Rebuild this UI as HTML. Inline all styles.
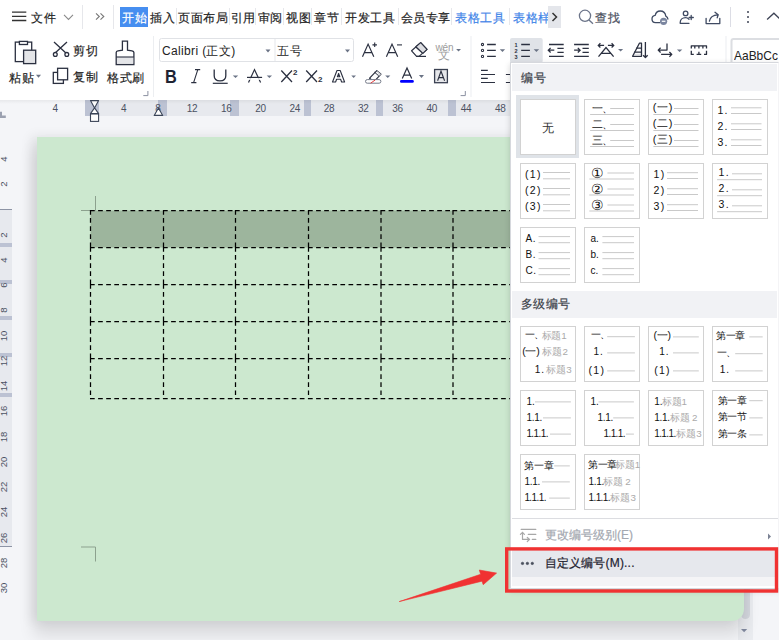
<!DOCTYPE html>
<html><head><meta charset="utf-8">
<style>
*{box-sizing:border-box;margin:0;padding:0}
html,body{width:779px;height:640px;overflow:hidden;background:#f4f5f8;font-family:"Liberation Sans",sans-serif;color:#222}
.a{position:absolute}
#top{left:0;top:0;width:779px;height:35px;background:#fff}
#tb{left:0;top:35px;width:779px;height:65px;background:#fff}
#page{left:37px;top:137px;width:707px;height:484px;background:#cce8cf;box-shadow:-1px 13px 16px 2px rgba(0,0,0,0.105),-5px 0px 12px 1px rgba(0,0,0,0.08);border-bottom-right-radius:12px}
.t{position:absolute;top:9.5px;height:16px;line-height:16px;font-size:12px;letter-spacing:0.5px;-webkit-text-stroke:0.2px currentColor;color:#1f1f1f;white-space:nowrap}
.sep{position:absolute;width:1px;top:8px;height:17px;background:#e6e7eb}
svg{position:absolute;overflow:visible}
.rn{position:absolute;top:3px;width:20px;text-align:center;font-size:10px;letter-spacing:-0.4px;line-height:12px;color:#4b5262}
.it{position:absolute;white-space:nowrap}
.bx{position:absolute;border:1px solid #d2d2d2;background:#fff}
.vn{position:absolute;left:-6.5px;width:20px;height:20px;text-align:center;font-size:9.5px;line-height:20px;color:#4b5262;transform:rotate(-90deg)}
</style></head><body>
<div class="a" style="left:737.5px;top:116px;width:15px;height:524px;background:#eaecf0"></div>
<div class="a" style="left:740.5px;top:480px;width:9.5px;height:139px;background:#d4d7de;border-radius:0 0 5px 5px"></div>
<div id="page" class="a"></div>
<svg style="left:0;top:0" width="779" height="640"><rect x="90.5" y="210.5" width="435.5" height="37" fill="#9db59d"/><path d="M95.5 196V210.5M81 210.5H95.5M95.5 547V561.5M81 547H95.5" stroke="#8ca18e" stroke-width="1" fill="none"/><path d="M90.0 210.5H163.0M163.0 210.5H235.0M235.0 210.5H308.0M308.0 210.5H380.5M380.5 210.5H452.5M452.5 210.5H525.0M90.0 247.5H163.0M163.0 247.5H235.0M235.0 247.5H308.0M308.0 247.5H380.5M380.5 247.5H452.5M452.5 247.5H525.0M90.0 284.5H163.0M163.0 284.5H235.0M235.0 284.5H308.0M308.0 284.5H380.5M380.5 284.5H452.5M452.5 284.5H525.0M90.0 321.5H163.0M163.0 321.5H235.0M235.0 321.5H308.0M308.0 321.5H380.5M380.5 321.5H452.5M452.5 321.5H525.0M90.0 358.5H163.0M163.0 358.5H235.0M235.0 358.5H308.0M308.0 358.5H380.5M380.5 358.5H452.5M452.5 358.5H525.0M90.0 398.5H163.0M163.0 398.5H235.0M235.0 398.5H308.0M308.0 398.5H380.5M380.5 398.5H452.5M452.5 398.5H525.0M90.5 210.0V247.0M90.5 247.0V284.0M90.5 284.0V321.0M90.5 321.0V358.0M90.5 358.0V398.0M163.5 210.0V247.0M163.5 247.0V284.0M163.5 284.0V321.0M163.5 321.0V358.0M163.5 358.0V398.0M235.5 210.0V247.0M235.5 247.0V284.0M235.5 284.0V321.0M235.5 321.0V358.0M235.5 358.0V398.0M308.5 210.0V247.0M308.5 247.0V284.0M308.5 284.0V321.0M308.5 321.0V358.0M308.5 358.0V398.0M381 210.0V247.0M381 247.0V284.0M381 284.0V321.0M381 321.0V358.0M381 358.0V398.0M453 210.0V247.0M453 247.0V284.0M453 284.0V321.0M453 321.0V358.0M453 358.0V398.0M525.5 210.0V247.0M525.5 247.0V284.0M525.5 284.0V321.0M525.5 321.0V358.0M525.5 358.0V398.0" stroke="#000" stroke-width="1.25" stroke-dasharray="4.7 3.4" fill="none"/></svg>
<div id="top" class="a">
  <svg style="left:0;top:0" width="779" height="35">
    <g stroke="#333" stroke-width="1.3" fill="none">
      <path d="M12 12.2H26.3M12 16.4H26.3M12 20.5H26.3"/>
    </g>
    <path d="M64 14.8L68.5 19.5L73 14.8" stroke="#8a8a8a" stroke-width="1.1" fill="none"/>
    <path d="M96 13.3L99.3 16.5L96 19.7M100.5 13.3L103.8 16.5L100.5 19.7" stroke="#777" stroke-width="1.1" fill="none"/>
  </svg>
  <div class="t" style="left:31px">文件</div>
  <div class="sep" style="left:82px;top:5px;height:24px"></div>
  <div class="sep" style="left:113px;top:5px;height:24px"></div>
  <div class="a" style="left:120px;top:7px;width:28px;height:20px;background:#468ef0"></div>
  <div class="t" style="left:122px;color:#fff">开始</div>
  <div class="t" style="left:150px">插入</div>
  <div class="sep" style="left:176px"></div>
  <div class="t" style="left:178px">页面布局</div>
  <div class="sep" style="left:229px"></div>
  <div class="t" style="left:230.5px">引用</div>
  <div class="sep" style="left:255px"></div>
  <div class="t" style="left:257.5px">审阅</div>
  <div class="sep" style="left:282.5px"></div>
  <div class="t" style="left:286px">视图</div>
  <div class="sep" style="left:311px"></div>
  <div class="t" style="left:314px">章节</div>
  <div class="sep" style="left:341px"></div>
  <div class="t" style="left:345px">开发工具</div>
  <div class="sep" style="left:397.5px"></div>
  <div class="t" style="left:400.5px">会员专享</div>
  <div class="sep" style="left:450.5px"></div>
  <div class="t" style="left:455px;color:#3f85e8">表格工具</div>
  <div class="sep" style="left:508.5px"></div>
  <div class="a" style="left:512px;top:0;width:36px;height:35px;overflow:hidden"><div class="t" style="left:1px;color:#3f85e8">表格样式</div></div>
  <div class="a" style="left:548px;top:6px;width:13px;height:22px;background:#e4e6eb"></div>
  <svg style="left:0;top:0" width="779" height="35">
    <path d="M552.5 13L556.5 17L552.5 21" stroke="#333" stroke-width="1.5" fill="none"/>
    <circle cx="585" cy="15.8" r="5.6" stroke="#6b7489" stroke-width="1.3" fill="none"/>
    <path d="M589 20L593 23.8" stroke="#6b7489" stroke-width="1.3"/>
  </svg>
  <div class="t" style="left:595px;color:#4a5060">查找</div>
  <svg style="left:0;top:0" width="779" height="35">
    <g stroke="#3f4a62" stroke-width="1.3" fill="none" stroke-linecap="round" stroke-linejoin="round">
      <path d="M660 22.6H655.5C653.2 22.6 652 21 652 19C652 17 653.3 15.6 655.2 15.4C655.7 12.8 657.6 11 660.2 11C663.2 11 665.4 13.2 665.8 16.2C667 16.8 667.8 17.8 667.9 19"/>
      <circle cx="685.6" cy="13.4" r="2.3"/>
      <path d="M689 19.2C688 18.2 686.9 17.6 685.6 17.6C682.5 17.6 680.2 19.8 680.2 22.5V23.3H689"/>
      <path d="M691.2 15.4V19.6M689.1 17.5H693.3"/>
      <path d="M706.1 18.3V23.6H719.8V18.3"/>
      <path d="M709.4 21.2C710 17.4 713 15 718 14.8M715 12.3L718.2 14.8L717.2 17.8"/>
    </g>
    <circle cx="663.6" cy="21.3" r="3.6" fill="#7b86a0"/>
    <path d="M661.8 21.3H665.4" stroke="#fff" stroke-width="1.2"/>
    <rect x="730" y="7" width="1" height="20" fill="#dcdde5"/>
    <rect x="747" y="11" width="2" height="2" fill="#6f7380"/>
    <rect x="747" y="16" width="2" height="2" fill="#6f7380"/>
    <rect x="747" y="21" width="2" height="2" fill="#6f7380"/>
    <path d="M767.1 19.5L773.9 13.2L780.5 19.5" stroke="#3d4355" stroke-width="1.3" fill="none"/>
  </svg>
</div>
<div id="tb" class="a">
  <svg style="left:0;top:0" width="779" height="65">
    <g stroke="#2b3040" stroke-width="1.3" fill="none">
      <rect x="15.3" y="7.1" width="16.4" height="19.5"/>
      <rect x="19.4" y="6.4" width="8.1" height="3.1" fill="#fff"/>
      <rect x="23.6" y="15.2" width="12.1" height="13.4" fill="#e4e5e8"/>
      <path d="M54 7.1L67 19M67 7.1L54 19"/>
      <circle cx="55.3" cy="19.4" r="1.9" fill="#fff"/>
      <circle cx="66.8" cy="19.4" r="1.9" fill="#fff"/>
      <rect x="53.3" y="37.4" width="10.1" height="11" />
      <rect x="57.6" y="33.3" width="10" height="11.5" fill="#fff"/>
      <path d="M116.2 29.5V17.4C116.2 16.6 117 16 118 15.8L122.4 15.2V6.1H127.5V15.2L132 15.8C133 16 133.9 16.6 133.9 17.4V29.5Z" />
    </g>
    <rect x="117" y="22" width="16.2" height="6.8" fill="#e4e5e8"/>
    <path d="M116.2 22H133.9" stroke="#2b3040" stroke-width="1.1"/>
    <path d="M36 39.8H41L38.5 42.8Z" fill="#6a7385"/>
    <path d="M143.3 60.6H147.9V56" stroke="#8a90a0" stroke-width="1" fill="none"/>
    <rect x="153" y="1" width="1" height="61" fill="#eceef1"/>
  </svg>
  <div class="t" style="left:9px;top:35px">粘贴</div>
  <div class="t" style="left:73px;top:8px">剪切</div>
  <div class="t" style="left:73px;top:33.5px">复制</div>
  <div class="t" style="left:107px;top:34.5px">格式刷</div>
  <svg style="left:0;top:0" width="779" height="65">
    <rect x="159.5" y="3.5" width="194" height="23" rx="2" fill="#fff" stroke="#e0e2e6"/>
    <rect x="274.5" y="4" width="1" height="22" fill="#e6e8eb"/>
    <path d="M265.5 14.6H270.5L268 17.4Z" fill="#6a7385"/>
    <path d="M345 14.6H350L347.5 17.4Z" fill="#6a7385"/>
    <!-- I -->
    <path d="M197.8 34.6L193.6 47.6M195 34.6H200.2M191.2 47.6H196.4" stroke="#2b3040" stroke-width="1.1" fill="none"/>
    <!-- U -->
    <path d="M214.2 34.4V40.8C214.2 44 216.6 45.9 220 45.9C223.4 45.9 225.8 44 225.8 40.8V34.4" stroke="#2b3040" stroke-width="1.3" fill="none"/>
    <path d="M212.8 48.3H227.7" stroke="#2b3040" stroke-width="1.2"/>
    <path d="M232.8 40.6H238.2L235.5 43Z" fill="#6a7385"/>
    <!-- A strike -->
    <path d="M248.5 47.5L254.5 34.6L260.6 47.5" stroke="#2b3040" stroke-width="1.2" fill="none" stroke-dasharray="0 0"/>
    <path d="M247 42.4H262.1" stroke="#2b3040" stroke-width="1.2"/>
    <rect x="249" y="43.2" width="11" height="1.6" fill="#fff"/>
    <path d="M266.7 40.6H272L269.35 43Z" fill="#6a7385"/>
    <!-- X2 -->
    <path d="M281.3 35.5L292 47M292 35.5L281.3 47" stroke="#2b3040" stroke-width="1.3"/>
    <path d="M306.2 35.5L317 47M317 35.5L306.2 47" stroke="#2b3040" stroke-width="1.3"/>
    <!-- A outline -->
    <path d="M332.5 47L337 35.5H340.2L344.6 47H341.6L340.6 44.2H336.6L335.6 47Z M337.4 41.8H339.8L338.6 38.4Z" fill="#fff" stroke="#2b3040" stroke-width="1.1" stroke-linejoin="round"/>
    <path d="M351.3 40.6H356L353.65 43Z" fill="#6a7385"/>
    <!-- highlighter -->
    <path d="M369.6 43.2L376.8 35.6L381 39.2L373.8 46.8Z" fill="#fff" stroke="#2b3040" stroke-width="1.2" stroke-linejoin="round"/>
    <path d="M374.5 37.2L378.9 41" stroke="#2b3040" stroke-width="1"/>
    <path d="M376.8 35.6L378.8 37.2L381 39.2L378.9 41Z" fill="#d9dbdf"/>
    <rect x="365.5" y="44.6" width="15.4" height="3.6" rx="1.8" fill="#fff" stroke="#747a88" stroke-width="1"/>
    <path d="M370.6 48.2L375.2 45" stroke="#e03c3c" stroke-width="1"/>
    <path d="M385.2 40.6H390.3L387.75 43Z" fill="#6a7385"/>
    <!-- A color -->
    <path d="M402.3 43.6L407 33L411.7 43.6M403.8 40.2H410.2" stroke="#2b3040" stroke-width="1.2" fill="none"/>
    <rect x="400" y="45.1" width="13.8" height="2.6" rx="1.3" fill="#0000ff"/>
    <path d="M418.9 40H424L421.45 42.9Z" fill="#6a7385"/>
    <!-- boxed A -->
    <rect x="434.6" y="34.5" width="12.8" height="13.2" fill="#e6e7ea" stroke="#3a4152" stroke-width="1.3"/>
    <path d="M437.6 45.8L441 36.2L444.6 45.8M438.8 42.6H443.4" stroke="#2b3040" stroke-width="1.1" fill="none"/>
    <!-- A+ A- -->
    <path d="M362.5 21.7L368.1 9.1L373.8 21.7M364.4 17.6H371.9" stroke="#2b3040" stroke-width="1.2" fill="none"/>
    <path d="M374.7 7.6V12.1M372.45 9.85H376.95" stroke="#2b3040" stroke-width="1.1"/>
    <path d="M386.4 21.7L392 9.1L397.7 21.7M388.3 17.6H395.8" stroke="#2b3040" stroke-width="1.2" fill="none"/>
    <path d="M397 9.9H402" stroke="#2b3040" stroke-width="1.1"/>
    <!-- eraser -->
    <path d="M411.6 15.8L420.7 7.6L427 14.4L419 21.4H416.6Z" fill="#fff" stroke="#2b3040" stroke-width="1.2" stroke-linejoin="round"/>
    <path d="M415.8 11.8L422.9 18.4" stroke="#2b3040" stroke-width="1.1"/>
    <path d="M420.7 7.6L427 14.4L422.9 18.4L415.8 11.8Z" fill="#dcdde1" stroke="#2b3040" stroke-width="1.2" stroke-linejoin="round"/>
    <path d="M416.6 21.4H426" stroke="#2b3040" stroke-width="1.2"/>
    <path d="M456.1 14H461L458.55 16.5Z" fill="#6a7385"/>
    <path d="M460.6 60.6H465.3V56" stroke="#8a90a0" stroke-width="1" fill="none"/>
    <rect x="470.5" y="1" width="1" height="61" fill="#eceef1"/>
    <!-- bullets -->
    <g stroke="#2b3040" fill="none">
      <circle cx="482.5" cy="9.5" r="1.1" stroke-width="1.1"/>
      <circle cx="482.5" cy="15.4" r="1.1" stroke-width="1.1"/>
      <circle cx="482.5" cy="21.4" r="1.1" stroke-width="1.1"/>
      <path d="M487.1 9.5H495.8M487.1 15.4H495.8M487.1 21.4H495.8" stroke-width="1.3"/>
    </g>
    <path d="M499.8 14.3H505.1L502.45 16.9Z" fill="#6a7385"/>
    <rect x="510" y="2.9" width="32.7" height="25" rx="2" fill="#e0e3e8"/>
    <g fill="#2b3040" font-family="Liberation Sans" font-weight="bold" font-size="5.5">
      <text x="514.6" y="11.8">1</text><text x="514.4" y="17.7">2</text><text x="514.4" y="23.7">3</text>
    </g>
    <path d="M521.2 9.5H529.9M521.2 15.4H529.9M521.2 21.4H529.9" stroke="#2b3040" stroke-width="1.3"/>
    <path d="M533.7 14.3H539.1L536.4 16.9Z" fill="#6a7385"/>
    <!-- indents -->
    <g stroke="#2b3040" stroke-width="1.3" fill="none">
      <path d="M549 9.5H563.7M557.4 13.4H563.7M557.4 17.4H563.7M549 21.3H563.7M548.3 15.2H554.3M550.6 12.9L548.3 15.2L550.6 17.5"/>
      <path d="M574.1 9.5H588.8M582.5 13.4H588.8M582.5 17.4H588.8M574.1 21.3H588.8M574.1 15.2H580.1M577.8 12.9L580.1 15.2L577.8 17.5"/>
      <path d="M598.3 10.4H604.1M600.4 8.3L598.3 10.4L600.4 12.5M607.9 10.4H613.7M611.6 8.3L613.7 10.4L611.6 12.5"/>
      <path d="M598.5 21.6L606 12.5L613.6 21.6M601.6 18.3H610.5"/>
    </g>
    <path d="M618 13.9H623.2L620.6 16.6Z" fill="#6a7385"/>
    <!-- sort -->
    <path d="M634 19.3H641" stroke="#dcdde1" stroke-width="1"/>
    <g stroke="#2b3040" stroke-width="1.3" fill="none" stroke-linejoin="round">
      <path d="M632.6 21.3L639.4 8.2H641.5V21.3Z"/>
      <path d="M636.3 13.1H641.5M634.2 17.2H641.5"/>
      <path d="M645.4 7V22.4M643.1 20.2L645.4 22.5L647.7 20.2"/>
      <path d="M667 8.4V15.1H658.2M660.6 12.7L658.2 15.1L660.6 17.5"/>
      <path d="M661.1 19.4H671.8M669.4 17L671.8 19.4L669.4 21.8"/>
      <path d="M691.3 13.5V10.8H706.5V13.5M694.8 10.8V13.5M698.9 10.8V13.5M702.9 10.8V13.5"/>
      <path d="M691.3 15.8V19.4H693.8M706.5 15.8V19.4H704M696.6 19.4H701.2M698.9 16.8V19.4"/>
    </g>
    <path d="M676.9 14.4H682.3L679.6 17Z" fill="#6a7385"/>
    <rect x="725.5" y="1" width="1" height="61" fill="#eceef1"/>
    <rect x="731.5" y="3.9" width="60" height="40" rx="2" fill="#fff" stroke="#dcdee2" stroke-width="2"/>
    <!-- align left row2 -->
    <path d="M481 35.4H487.8M481 39.5H495M481 43.4H487.8M481 47.5H495" stroke="#2b3040" stroke-width="1.2"/>
    <path d="M505.9 39.5H511M505.9 47.5H511" stroke="#2b3040" stroke-width="1.2"/>
  </svg>
  <div class="a" style="left:162px;top:9px;font-size:12px;line-height:14px;color:#222;white-space:nowrap;letter-spacing:0.35px">Calibri (正文)</div>
  <div class="a" style="left:276.5px;top:9px;font-size:12px;line-height:14px;color:#222;letter-spacing:1.2px">五号</div>
  <div class="a" style="left:165px;top:32px;font-size:19px;line-height:19px;font-weight:bold;color:#1e2333;transform:scaleX(0.86);transform-origin:0 0">B</div>
  <div class="a" style="left:293px;top:34px;font-size:8px;line-height:8px;font-weight:bold;color:#2b3040">2</div>
  <div class="a" style="left:318px;top:41px;font-size:8px;line-height:8px;font-weight:bold;color:#2b3040">2</div>
  <div class="a" style="left:435.5px;top:7.5px;font-size:10px;line-height:10px;color:#9c9c9c;letter-spacing:-0.2px">wén</div>
  <div class="a" style="left:437.5px;top:14.5px;font-size:12px;line-height:11px;color:#a0a0a0">文</div>
  <div class="a" style="left:734px;top:13px;font-size:13px;line-height:15px;color:#222;white-space:nowrap;transform:scaleX(0.92);transform-origin:0 0">AaBbCc</div>
</div>

<div id="ruler" class="a" style="left:0;top:100px;width:779px;height:22px">
  <div class="a" style="left:85px;top:0;width:430px;height:16px;background:#e7e9ee"></div>
  <div class="a" style="left:85px;top:0;width:14.0px;height:16px;background:#bcc2d3"></div><div class="a" style="left:158px;top:0;width:9.0px;height:16px;background:#bcc2d3"></div><div class="a" style="left:230.3px;top:0;width:8.3px;height:16px;background:#bcc2d3"></div><div class="a" style="left:303.5px;top:0;width:7.2px;height:16px;background:#bcc2d3"></div><div class="a" style="left:375.5px;top:0;width:7.9px;height:16px;background:#bcc2d3"></div><div class="a" style="left:448px;top:0;width:8.0px;height:16px;background:#bcc2d3"></div>
  <div class="rn" style="left:45.00px">4</div><div class="rn" style="left:113.50px">4</div><div class="rn" style="left:147.75px">8</div><div class="rn" style="left:182.00px">12</div><div class="rn" style="left:216.25px">16</div><div class="rn" style="left:250.50px">20</div><div class="rn" style="left:284.75px">24</div><div class="rn" style="left:319.00px">28</div><div class="rn" style="left:353.25px">32</div><div class="rn" style="left:387.50px">36</div><div class="rn" style="left:421.75px">40</div><div class="rn" style="left:456.00px">44</div><div class="rn" style="left:490.25px">48</div>
  <svg style="left:0;top:0" width="779" height="22">
    <path d="M0 11.8H2V15.6H5.8V18H0Z" fill="#9ba1b0"/>
    <path d="M90.5 0.6H98.6L94.55 7.9L98.6 13.6H90.5L94.55 7.9Z" fill="#fff" stroke="#3c4659" stroke-width="1.1" stroke-linejoin="round"/>
    <rect x="90.5" y="14" width="8.1" height="7.4" fill="#fff" stroke="#3c4659" stroke-width="1.1"/>
    <path d="M154.2 15.4L158.45 8L162.7 15.4Z" fill="#fff" stroke="#3c4659" stroke-width="1.1" stroke-linejoin="round"/>
  </svg>
  <div class="a" style="left:0;top:0;width:779px;height:4px;background:linear-gradient(rgba(0,0,0,0.05),rgba(0,0,0,0))"></div>
</div>
<div id="vr" class="a" style="left:0;top:0;width:14px;height:640px">
  <div class="a" style="left:0;top:209px;width:12px;height:338px;background:#e7e9ee;border-top:1px solid #8d94a5;border-bottom:1px solid #8d94a5"></div>
  <div class="a" style="left:0;top:242.5px;width:12px;height:4.0px;background:#bcc2d3"></div><div class="a" style="left:0;top:279.8px;width:12px;height:4.0px;background:#bcc2d3"></div><div class="a" style="left:0;top:316px;width:12px;height:4.0px;background:#bcc2d3"></div><div class="a" style="left:0;top:353px;width:12px;height:4.0px;background:#bcc2d3"></div><div class="a" style="left:0;top:392.5px;width:12px;height:4.0px;background:#bcc2d3"></div>
  <div class="vn" style="top:149.02px">4</div><div class="vn" style="top:174.26px">2</div><div class="vn" style="top:224.74px">2</div><div class="vn" style="top:249.98px">4</div><div class="vn" style="top:275.22px">6</div><div class="vn" style="top:300.46px">8</div><div class="vn" style="top:325.70px">10</div><div class="vn" style="top:350.94px">12</div><div class="vn" style="top:376.18px">14</div><div class="vn" style="top:401.42px">16</div><div class="vn" style="top:426.66px">18</div><div class="vn" style="top:451.90px">20</div><div class="vn" style="top:477.14px">22</div><div class="vn" style="top:502.38px">24</div><div class="vn" style="top:527.62px">26</div><div class="vn" style="top:552.86px">28</div><div class="vn" style="top:578.10px">30</div>
</div>
<!--DD-->
<div id="dd" class="a" style="left:510px;top:62px;width:269px;height:526.5px;background:#fff;border:1px solid #d6d8dd;border-right-color:#f4f4f6;box-shadow:0 2px 6px rgba(0,0,0,0.16)">
<div class="a" style="left:1px;top:1px;width:265px;height:27px;background:#f1f2f5"></div>
<div class="a" style="left:10px;top:7.5px;font-size:12px;line-height:14px;color:#3b3f48;letter-spacing:0.5px;-webkit-text-stroke:0.2px currentColor">编号</div>
<div class="a" style="left:1px;top:227.8px;width:265px;height:27px;background:#f1f2f5"></div>
<div class="a" style="left:9.5px;top:233.5px;font-size:12px;line-height:14px;color:#3b3f48;letter-spacing:0.5px;-webkit-text-stroke:0.2px currentColor">多级编号</div>

<div class="a" style="left:-1px;top:-1px;width:268px;height:526px">
<div class="a" style="left:5.7999999999999545px;top:32.900000000000006px;width:63px;height:63px;background:#dfe3e8"></div><div class="bx" style="left:10.3px;top:37.2px;width:55.5px;height:55.5px"></div><div class="bx" style="left:74.3px;top:37.2px;width:55.5px;height:55.5px"></div><div class="bx" style="left:138.3px;top:37.2px;width:55.5px;height:55.5px"></div><div class="bx" style="left:202.2px;top:37.2px;width:55.5px;height:55.5px"></div><div class="bx" style="left:10.3px;top:101.3px;width:55.5px;height:55.5px"></div><div class="bx" style="left:74.3px;top:101.3px;width:55.5px;height:55.5px"></div><div class="bx" style="left:138.3px;top:101.3px;width:55.5px;height:55.5px"></div><div class="bx" style="left:202.2px;top:101.3px;width:55.5px;height:55.5px"></div><div class="bx" style="left:10.3px;top:165.4px;width:55.5px;height:55.5px"></div><div class="bx" style="left:74.3px;top:165.4px;width:55.5px;height:55.5px"></div><div class="bx" style="left:10.3px;top:264.2px;width:55.5px;height:55.5px"></div><div class="bx" style="left:74.3px;top:264.2px;width:55.5px;height:55.5px"></div><div class="bx" style="left:138.3px;top:264.2px;width:55.5px;height:55.5px"></div><div class="bx" style="left:202.2px;top:264.2px;width:55.5px;height:55.5px"></div><div class="bx" style="left:10.3px;top:328.2px;width:55.5px;height:55.5px"></div><div class="bx" style="left:74.3px;top:328.2px;width:55.5px;height:55.5px"></div><div class="bx" style="left:138.3px;top:328.2px;width:55.5px;height:55.5px"></div><div class="bx" style="left:202.2px;top:328.2px;width:55.5px;height:55.5px"></div><div class="bx" style="left:10.3px;top:392.2px;width:55.5px;height:55.5px"></div><div class="bx" style="left:74.3px;top:392.2px;width:55.5px;height:55.5px"></div><div class="it" style="left:32.2px;top:58.6px;font-size:12px;line-height:14.4px;color:#333;">无</div><div class="it" style="left:81.5px;top:39.7px;font-size:10.5px;line-height:12.6px;color:#111;letter-spacing:-0.5px">一、</div><div class="it" style="left:81.5px;top:55.7px;font-size:10.5px;line-height:12.6px;color:#111;letter-spacing:-0.5px">二、</div><div class="it" style="left:81.5px;top:71.7px;font-size:10.5px;line-height:12.6px;color:#111;letter-spacing:-0.5px">三、</div><div class="it" style="left:142.8px;top:39.4px;font-size:11px;line-height:13.2px;color:#111;letter-spacing:0.6px">(一)</div><div class="it" style="left:142.8px;top:55.4px;font-size:11px;line-height:13.2px;color:#111;letter-spacing:0.6px">(二)</div><div class="it" style="left:142.8px;top:71.4px;font-size:11px;line-height:13.2px;color:#111;letter-spacing:0.6px">(三)</div><div class="it" style="left:207.6px;top:41.7px;font-size:10.5px;line-height:12.6px;color:#111;letter-spacing:1px">1.</div><div class="it" style="left:207.6px;top:57.7px;font-size:10.5px;line-height:12.6px;color:#111;letter-spacing:1px">2.</div><div class="it" style="left:207.6px;top:73.7px;font-size:10.5px;line-height:12.6px;color:#111;letter-spacing:1px">3.</div><div class="it" style="left:15.0px;top:105.7px;font-size:10.5px;line-height:12.6px;color:#111;letter-spacing:1.3px">(1)</div><div class="it" style="left:15.0px;top:121.7px;font-size:10.5px;line-height:12.6px;color:#111;letter-spacing:1.3px">(2)</div><div class="it" style="left:15.0px;top:137.7px;font-size:10.5px;line-height:12.6px;color:#111;letter-spacing:1.3px">(3)</div><div class="it" style="left:80.8px;top:103.7px;font-size:13.5px;line-height:16.2px;color:#111;">①</div><div class="it" style="left:80.8px;top:119.7px;font-size:13.5px;line-height:16.2px;color:#111;">②</div><div class="it" style="left:80.8px;top:135.7px;font-size:13.5px;line-height:16.2px;color:#111;">③</div><div class="it" style="left:143.5px;top:106.2px;font-size:10.5px;line-height:12.6px;color:#111;letter-spacing:1.5px">1)</div><div class="it" style="left:143.5px;top:122.2px;font-size:10.5px;line-height:12.6px;color:#111;letter-spacing:1.5px">2)</div><div class="it" style="left:143.5px;top:138.2px;font-size:10.5px;line-height:12.6px;color:#111;letter-spacing:1.5px">3)</div><div class="it" style="left:208.5px;top:104.0px;font-size:10.5px;line-height:12.6px;color:#111;letter-spacing:1.5px">1.</div><div class="it" style="left:208.5px;top:120.0px;font-size:10.5px;line-height:12.6px;color:#111;letter-spacing:1.5px">2.</div><div class="it" style="left:208.5px;top:136.0px;font-size:10.5px;line-height:12.6px;color:#111;letter-spacing:1.5px">3.</div><div class="it" style="left:15.6px;top:170.5px;font-size:10px;line-height:12.0px;color:#111;letter-spacing:0.5px">A.</div><div class="it" style="left:15.6px;top:186.5px;font-size:10px;line-height:12.0px;color:#111;letter-spacing:0.5px">B.</div><div class="it" style="left:15.6px;top:202.5px;font-size:10px;line-height:12.0px;color:#111;letter-spacing:0.5px">C.</div><div class="it" style="left:80.5px;top:170.5px;font-size:10px;line-height:12.0px;color:#111;">a.</div><div class="it" style="left:80.5px;top:186.5px;font-size:10px;line-height:12.0px;color:#111;">b.</div><div class="it" style="left:80.5px;top:202.5px;font-size:10px;line-height:12.0px;color:#111;">c.</div><div class="it" style="left:15.0px;top:267.4px;font-size:10px;line-height:12.0px;color:#111;letter-spacing:-1px">一、</div><div class="it" style="left:31.7px;top:267.5px;font-size:9.8px;line-height:11.8px;color:#aaaaaa;letter-spacing:-0.2px">标题1</div><div class="it" style="left:12.2px;top:283.4px;font-size:10.5px;line-height:12.6px;color:#111;letter-spacing:-0.2px">(一)</div><div class="it" style="left:32.0px;top:283.8px;font-size:9.8px;line-height:11.8px;color:#aaaaaa;letter-spacing:0.2px">标题2</div><div class="it" style="left:24.7px;top:301.6px;font-size:10px;line-height:12.0px;color:#111;letter-spacing:1px">1.</div><div class="it" style="left:35.9px;top:301.7px;font-size:9.8px;line-height:11.8px;color:#aaaaaa;letter-spacing:0.2px">标题3</div><div class="it" style="left:81.0px;top:267.4px;font-size:10px;line-height:12.0px;color:#111;letter-spacing:-1px">一、</div><div class="it" style="left:83.5px;top:284.0px;font-size:10px;line-height:12.0px;color:#111;letter-spacing:1px">1.</div><div class="it" style="left:78.5px;top:301.7px;font-size:10.5px;line-height:12.6px;color:#111;letter-spacing:1.3px">(1)</div><div class="it" style="left:143.4px;top:267.1px;font-size:10.5px;line-height:12.6px;color:#111;letter-spacing:-0.2px">(一)</div><div class="it" style="left:149.2px;top:284.0px;font-size:10px;line-height:12.0px;color:#111;letter-spacing:1px">1.</div><div class="it" style="left:144.2px;top:301.7px;font-size:10.5px;line-height:12.6px;color:#111;letter-spacing:1.3px">(1)</div><div class="it" style="left:206.0px;top:267.7px;font-size:9.5px;line-height:11.4px;color:#111;letter-spacing:-0.3px">第一章</div><div class="it" style="left:206.8px;top:284.5px;font-size:10px;line-height:12.0px;color:#111;letter-spacing:-1px">一、</div><div class="it" style="left:209.8px;top:302.0px;font-size:10px;line-height:12.0px;color:#111;letter-spacing:1px">1.</div><div class="it" style="left:16.4px;top:333.5px;font-size:10px;line-height:12.0px;color:#111;">1.</div><div class="it" style="left:16.4px;top:349.5px;font-size:10px;line-height:12.0px;color:#111;letter-spacing:-0.3px">1.1.</div><div class="it" style="left:16.4px;top:365.5px;font-size:10px;line-height:12.0px;color:#111;letter-spacing:-0.6px">1.1.1.</div><div class="it" style="left:80.5px;top:333.5px;font-size:10px;line-height:12.0px;color:#111;">1.</div><div class="it" style="left:87.6px;top:349.5px;font-size:10px;line-height:12.0px;color:#111;letter-spacing:-0.3px">1.1.</div><div class="it" style="left:93.5px;top:365.5px;font-size:10px;line-height:12.0px;color:#111;letter-spacing:-0.6px">1.1.1.</div><div class="it" style="left:144.2px;top:333.5px;font-size:10px;line-height:12.0px;color:#111;">1.</div><div class="it" style="left:152.0px;top:333.6px;font-size:9.8px;line-height:11.8px;color:#aaaaaa;letter-spacing:-0.2px">标题1</div><div class="it" style="left:144.2px;top:349.5px;font-size:10px;line-height:12.0px;color:#111;letter-spacing:-0.3px">1.1.</div><div class="it" style="left:160.0px;top:349.6px;font-size:9.8px;line-height:11.8px;color:#aaaaaa;letter-spacing:-0.2px">标题 2</div><div class="it" style="left:144.2px;top:366.0px;font-size:10px;line-height:12.0px;color:#111;letter-spacing:-0.6px">1.1.1.</div><div class="it" style="left:165.9px;top:366.1px;font-size:9.8px;line-height:11.8px;color:#aaaaaa;letter-spacing:0.2px">标题3</div><div class="it" style="left:207.5px;top:332.8px;font-size:9.5px;line-height:11.4px;color:#111;letter-spacing:-0.3px">第一章</div><div class="it" style="left:207.5px;top:349.3px;font-size:9.5px;line-height:11.4px;color:#111;letter-spacing:-0.3px">第一节</div><div class="it" style="left:207.5px;top:366.3px;font-size:9.5px;line-height:11.4px;color:#111;letter-spacing:-0.3px">第一条</div><div class="it" style="left:14.2px;top:397.8px;font-size:9.5px;line-height:11.4px;color:#111;letter-spacing:-0.3px">第一章</div><div class="it" style="left:14.4px;top:413.5px;font-size:10px;line-height:12.0px;color:#111;letter-spacing:-0.3px">1.1.</div><div class="it" style="left:14.4px;top:429.5px;font-size:10px;line-height:12.0px;color:#111;letter-spacing:-0.6px">1.1.1.</div><div class="it" style="left:78.1px;top:397.3px;font-size:9.5px;line-height:11.4px;color:#111;letter-spacing:-0.3px">第一章</div><div class="it" style="left:105.2px;top:397.1px;font-size:9.8px;line-height:11.8px;color:#aaaaaa;letter-spacing:-0.2px">标题1</div><div class="it" style="left:78.5px;top:413.6px;font-size:10px;line-height:12.0px;color:#111;letter-spacing:-0.3px">1.1.</div><div class="it" style="left:93.1px;top:413.7px;font-size:9.8px;line-height:11.8px;color:#aaaaaa;letter-spacing:-0.2px">标题 2</div><div class="it" style="left:78.5px;top:429.6px;font-size:10px;line-height:12.0px;color:#111;letter-spacing:-0.6px">1.1.1.</div><div class="it" style="left:100.2px;top:429.7px;font-size:9.8px;line-height:11.8px;color:#aaaaaa;letter-spacing:0.2px">标题3</div>
<svg style="left:0;top:0" width="268" height="526"><path d="M100.2 46.5H124.0M80.1 52.5H124.0M100.2 62.5H124.0M80.1 68.5H124.0M100.2 78.5H124.0M80.1 84.5H124.0M164.0 46.5H188.5M143.4 52.5H188.5M164.0 62.5H188.5M143.4 68.5H188.5M164.0 78.5H188.5M143.4 84.5H188.5M221.0 45.8H251.5M221.0 51.5H251.5M221.0 61.8H251.5M221.0 67.5H251.5M221.0 77.8H251.5M221.0 83.5H251.5M33.0 110.5H60.0M33.0 116.8H60.0M33.0 126.5H60.0M33.0 132.8H60.0M33.0 142.5H60.0M33.0 148.8H60.0M97.4 111.0H124.0M79.3 117.0H124.0M97.4 127.0H124.0M79.3 133.0H124.0M97.4 143.0H124.0M79.3 149.0H124.0M157.0 110.7H188.0M157.0 116.5H188.0M157.0 126.7H188.0M157.0 132.5H188.0M157.0 142.7H188.0M157.0 148.5H188.0M222.0 111.8H252.0M207.1 117.7H252.0M222.0 127.8H252.0M207.1 133.7H252.0M222.0 143.8H252.0M207.1 149.7H252.0M28.5 174.6H60.0M28.5 180.7H60.0M28.5 190.6H60.0M28.5 196.7H60.0M28.5 206.6H60.0M28.5 212.7H60.0M92.4 174.6H124.0M92.4 180.7H124.0M92.4 190.6H124.0M92.4 196.7H124.0M92.4 206.6H124.0M92.4 212.7H124.0M97.2 274.7H124.9M97.2 290.9H124.9M97.2 308.9H124.9M163.0 274.9H188.8M163.0 290.9H188.8M163.0 308.9H188.8M239.3 274.9H252.7M225.2 291.7H252.7M225.2 308.9H252.7M25.0 339.9H60.9M33.0 355.9H60.9M40.0 372.1H60.9M88.5 339.9H123.9M103.2 355.9H123.9M116.0 372.1H123.9M239.3 338.7H252.7M239.3 355.9H252.7M239.3 372.9H252.7M44.2 403.9H59.8M32.0 419.9H59.8M39.2 436.1H59.8" stroke="#c9c9c9" stroke-width="1" fill="none"/></svg>
</div>
<div class="a" style="left:1px;top:455.0px;width:266px;height:1px;background:#dcdde1"></div>
<svg style="left:0;top:0" width="268" height="526">
  <g stroke="#a8a8a8" stroke-width="1.2" fill="none" stroke-linecap="round" stroke-linejoin="round">
    <path d="M10.200000000000045 466.4H24.799999999999955M17.299999999999955 471.4H24.799999999999955M21.299999999999955 476.4H24.799999999999955"/>
    <path d="M9.399999999999977 471.4L11.5 469.29999999999995L13.399999999999977 471.4M11.5 469.29999999999995V476.4H18.600000000000023M16.299999999999955 474.5L18.600000000000023 476.4L16.299999999999955 478.5"/>
  </g>
  <path d="M257 470.5L260 473.5L257 476.5Z" fill="#7b8294"/>
</svg>
<div class="a" style="left:34.0px;top:465.3px;font-size:12px;line-height:14px;color:#a4a8b0;letter-spacing:0px;-webkit-text-stroke:0.2px currentColor;white-space:nowrap">更改编号级别(E)</div>
<div class="a" style="left:1px;top:486.0px;width:266px;height:28.0px;background:#e6e8ed"></div>
<div class="a" style="left:1px;top:514.0px;width:266px;height:9px;background:#f4f4f6"></div>
<svg style="left:0;top:0" width="268" height="526">
  <g fill="#4a4f5c" stroke="#3d4352" stroke-width="0.6">
    <circle cx="11.5" cy="500.4" r="1.2"/><circle cx="16.399999999999977" cy="500.4" r="1.2"/><circle cx="21.299999999999955" cy="500.4" r="1.2"/>
  </g>
</svg>
<div class="a" style="left:33.5px;top:493.0px;font-size:12px;line-height:14px;color:#1f2330;letter-spacing:0.2px;-webkit-text-stroke:0.2px currentColor;white-space:nowrap">自定义编号(M)...</div>
</div>
<!--/DD-->
<!--RED-->
<svg style="left:0;top:0" width="779" height="640">
  <path d="M741 628.9H747.2L744.1 632.2Z" fill="#7d859a"/>
  <rect x="506.7" y="548.9" width="269.8" height="42.1" fill="none" stroke="#f03232" stroke-width="3.4"/>
  <path d="M399.2 601.6L480.6 574.3L479.3 570L496.6 573.1L483.2 584.7L482 581.2Z" fill="#f03232" stroke="#f03232" stroke-width="0.6" stroke-linejoin="round"/>
</svg>
<!--/RED-->
</body></html>
